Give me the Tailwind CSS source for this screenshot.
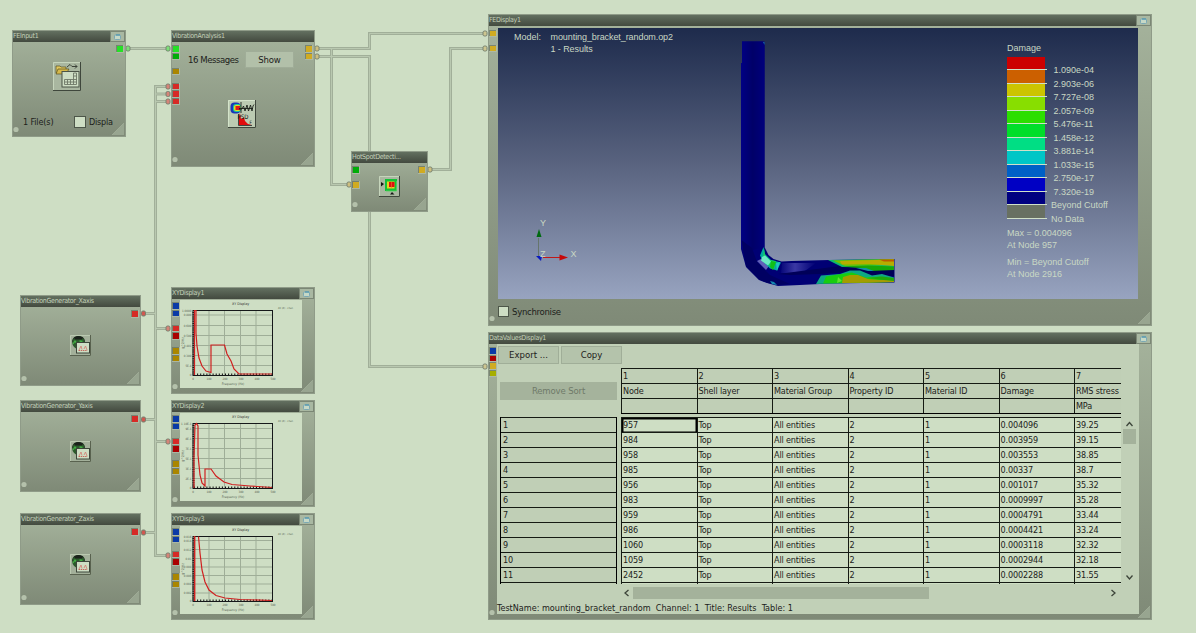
<!DOCTYPE html>
<html lang="en">
<head>
<meta charset="utf-8">
<title>Vibration analysis flow</title>
<script src="https://cdn.jsdelivr.net/npm/@tailwindcss/browser@4"></script>
</head>
<body class="bg-[#cedec4]">
<main class="relative w-[1196px] h-[633px] overflow-hidden bg-[#cedec4] text-[#1c211a] font-['DejaVu_Sans_Condensed','DejaVu_Sans',sans-serif] text-[9px] leading-none whitespace-nowrap">

  <!-- pipes between glyphs -->
  <svg class="absolute inset-0" width="1196" height="633" fill="none">
    <defs>
      <g id="pipes">
        <path d="M128 48.5H168M317 48.5H369.5V33.5H485M331.500 48.500V184.500H349M317 56.500H369.500V366.500H485M430 169.500H450.500V48.500H485"/>
        <path d="M168 86.500H155.500V555.500H168M155.500 94H168M155.500 101.500H168M143 313.500H155.500M155.500 328.500H168M143 419.500H155.500M155.500 441.500H168M143 532.500H155.500"/>
      </g>
    </defs>
    <use href="#pipes" stroke="#a1af99" stroke-width="3"/>
    <use href="#pipes" stroke="#b9c8b0" stroke-width="1"/>
    <g id="plugs" stroke="#75806f" stroke-width="1"></g>
  </svg>

  <!-- FEInput1 -->
  <section class="absolute left-[12px] top-[30px] w-[114px] h-[107px] flex flex-col border border-[#8f9b88] bg-linear-to-b from-[#a5b39c] to-[#7f8a77]" data-title="FEInput1" data-max="1">
    <div class="relative flex-1 flex flex-col">
      <div data-ports="lime" data-side="right"></div>
      <svg class="mt-[20px] ml-[40px]" width="28" height="29" viewBox="0 0 28 29">
        <path d="M0 0H28V29H0Z" fill="#a9b7a0"/><path d="M.5 28V.5H27" fill="none" stroke="#c6d5bc"/><path d="M27.500 0V28.500H0" fill="none" stroke="#3f473c"/>
        <path d="M3 4h4l1 1h5v6H3z" fill="#e0c65c" stroke="#554d20" stroke-width=".7"/><path d="M5 7h11l-3 5H3z" fill="#d6b94a" stroke="#554d20" stroke-width=".7"/>
        <path d="M14 5l3-2.500 2 2h5l-2-2m2 2l-2 2" fill="none" stroke="#3b4238"/>
        <rect x="9" y="9.500" width="17" height="15.500" fill="#cedec4" stroke="#4b5447"/>
        <path d="M11.500 17.500h12v5h-12zM11.500 20h12M14.500 17.500v5M17.500 17.500v5M20.500 11v11.500M23.500 11v7M20.500 11h3M20.500 14h3" fill="none" stroke="#6d7767" stroke-width=".9"/>
      </svg>
      <div class="mt-[24px] w-full h-[13px] flex items-center pl-[10px]">
        <span class="w-[51px] text-[9px] tracking-[-0.15px] pt-px">1 File(s)</span>
        <span class="w-[12px] h-[12px] bg-[#cedec4] border border-[#4d5649]"></span>
        <span class="ml-[3px] text-[9px] tracking-[-0.2px] pt-px">Displa</span>
      </div>
    </div>
  </section>

  <!-- VibrationAnalysis1 -->
  <section class="absolute left-[171px] top-[30px] w-[144px] h-[137px] flex flex-col border border-[#8f9b88] bg-linear-to-b from-[#a5b39c] to-[#7f8a77]" data-title="VibrationAnalysis1">
    <div class="relative flex-1 flex flex-col">
      <div data-ports="lime green - gold - red red red" data-side="left"></div>
      <div data-ports="amber amber" data-side="right"></div>
      <div class="mt-[9px] ml-[16px] flex items-center gap-[6px]">
        <span class="w-[51px] text-[9.500px] tracking-[-0.45px]">16 Messages</span>
        <span class="w-[49px] h-[17px] flex items-center justify-center bg-[#b2c0a9] border border-[#a0ad98] text-[9.500px] tracking-[-0.2px]">Show</span>
      </div>
      <svg class="mt-[32px] ml-[56px]" width="28" height="28" viewBox="0 0 28 28">
        <path d="M0 0H28V28H0Z" fill="#bccbb2"/><path d="M.5 27V.5H27" fill="none" stroke="#d4e3ca"/><path d="M27.500 0V27.500H0" fill="none" stroke="#3f473c"/>
        <rect x="2.500" y="2.500" width="10" height="11" rx="4" fill="#1a38b8"/><rect x="5" y="4" width="8" height="8" rx="3" fill="#18c8a0"/><rect x="6" y="5" width="6.500" height="6" rx="2" fill="#e6dc20"/><rect x="7.500" y="6" width="4.500" height="4" fill="#e01818"/>
        <path d="M11 9h3l1.500-3 1.500 5 2-6 1.500 6 2-6 1.500 6 1-5 1-1.500M13 2v11M11 8.500h14" fill="none" stroke="#1b201a" stroke-width=".9"/>
        <path d="M11 25V16l1-3 1 6 3-1.500 1 3.500 3 3 4 1z" fill="#e00c0c"/><path d="M10.500 14V25.500H24" fill="none" stroke="#222" stroke-width=".8"/>
        <text x="9.500" y="19" font-size="6" fill="#111">PSD</text><text x="21.500" y="24" font-size="4.500" fill="#111">F</text>
      </svg>
    </div>
  </section>

  <!-- HotSpotDetection -->
  <section class="absolute left-[351px] top-[151px] w-[77px] h-[61px] flex flex-col border border-[#8f9b88] bg-linear-to-b from-[#a5b39c] to-[#7f8a77]" data-title="HotSpotDetecti...">
    <div class="relative flex-1">
      <div data-ports="green - amber" data-side="left"></div>
      <div data-ports="amber" data-side="right"></div>
      <svg class="mt-[13px] ml-[27px]" width="21" height="21" viewBox="0 0 21 21">
        <path d="M0 0H21V21H0Z" fill="#a9b7a0"/><path d="M.5 20V.5H20" fill="none" stroke="#c6d5bc"/><path d="M20.500 0V20.500H0" fill="none" stroke="#3f473c"/>
        <rect x="6" y="3" width="12" height="12" fill="#12c236"/><path d="M17.500 5V15H7" fill="none" stroke="#5ccf5e" stroke-width=".8"/><rect x="8" y="5.500" width="7.500" height="7" fill="#e8d020"/><rect x="10" y="6" width="5.500" height="5" fill="#e01010"/><path d="M12.500 5.500v7" stroke="#e88020" stroke-width=".6"/>
        <path d="M2 6l3 2-3 2.500zM11 18.500l2-2.500 2.500 2.500z" fill="#141814"/>
      </svg>
    </div>
  </section>

  <!-- FEDisplay1 -->
  <section class="absolute left-[488px] top-[14px] w-[664px] h-[312px] flex flex-col border border-[#8f9b88] bg-linear-to-b from-[#a5b39c] to-[#7f8a77]" data-title="FEDisplay1" data-max="1">
    <div class="relative flex-1 flex flex-col pl-[9px] pt-[2px]">
      <div data-ports="- amber - amber" data-side="top"></div>
      <div class="relative w-[640px] h-[271px] flex justify-between bg-linear-to-b from-[#1e2b4c] via-[#59637f] via-50% to-[#98a4c0] text-[#c9d8c4] font-['Liberation_Sans',Arial,sans-serif] text-[9px]">
        <svg class="absolute inset-0" width="640" height="271" viewBox="498 28 640 271">
          <defs>
            <linearGradient id="tube" x1="0" x2="1"><stop offset="0" stop-color="#000084"/><stop offset=".5" stop-color="#000068"/><stop offset="1" stop-color="#00007c"/></linearGradient>
            <linearGradient id="sheen" x1="0" x2="1"><stop offset="0" stop-color="#08087a"/><stop offset=".4" stop-color="#3a38a4"/><stop offset="1" stop-color="#000074"/></linearGradient>
          </defs>
          <path d="M742 41.500H763l1.500 3V247l4 8 5 4 8 2.500 10-.5 38-1 65-1V282.500L830 283.500 800 285 778 286 767 283 759 280 746 267 741 249V215h.5V187h-.5V160h.5V146h-.5V63h1z" fill="#000074"/>
          <path d="M742 41.500H764.500V247L753 250 741 249V63h1z" fill="url(#tube)"/>
          <path d="M741.500 240L746 266 759 279.500 768 283 778 285 790 284 770 275 757 262 752 248z" fill="#000062"/>
          <path d="M763 42h1.500v3z" fill="#1470a8"/>
          <path d="M782 263h34l-14 10H781z" fill="url(#sheen)"/>
          <path d="M778 274L840 266 870 268 894 270V276L870 275 850 272 820 274 790 275z" fill="#000058"/>
          <path d="M757 261l4-2 8 7-3 4z" fill="#6060b8"/>
          <path d="M763.500 247l1.500 7 6 6 10 2.500-4 8-7-2-7-7-3-6z" fill="#00aaa0"/>
          <path d="M764 248l1 7 5 5 6 1-2 8-6-4-5-8z" fill="#14d060"/>
          <path d="M762 257l3-1.500 6 6-3 4-7-5z" fill="#6ce8c4"/>
          <path d="M771 261l5 1-3 8-3-3z" fill="#10c018"/><path d="M776 263l4-1-3 9z" fill="#20c8c0"/>
          <path d="M770 281l4 1 3 3-5-1z" fill="#1488b0"/>
          <path d="M828 260l14 7 52 1V259z" fill="#0cb870"/>
          <path d="M833 260.500l12 5.500 49-1V259z" fill="#70c000"/>
          <path d="M840 261L894 259.500V266L870 264 842 264.500z" fill="#b8ac00"/>
          <path d="M879 259.500H894V261.500H884z" fill="#bc5a00"/>
          <path d="M841 266.500L868 265.500 894 266.500V270L870 271 862 268z" fill="#18a808"/>
          <path d="M856 268l10 0 8 3-6 0z" fill="#1090a0"/>
          <path d="M816 284l5-8.500L840 274l10-3.500 10 0 12 5 10-1.500 12 3.500V282L850 283z" fill="#0ea884"/>
          <path d="M823 283.500l3-7 12-2 14-2 14 5 14-1 14 3.500V282z" fill="#18cc10"/>
          <path d="M842 283L843 277l7-2h8l10 4 12 1 14-.5V282L868 282.800z" fill="#a49c00"/>
          <path d="M868 278l14-1.500 12 1.500V281l-10-1z" fill="#20a80c"/>
          <path d="M838 277l4 4-5 2z" fill="#60e030"/>
          <!-- axis triad -->
          <path d="M538.500 256.500V238" stroke="#66756c" stroke-width="1"/><path d="M539 229l-2.500 8h5z" fill="#006a10"/>
          <path d="M543 257.500H560" stroke="#c01818" stroke-width="1"/><path d="M568 257.500l-8.500-3v6z" fill="#c80808"/>
          <path d="M536 256l6 0-1 5z" fill="#0818c0"/>
          <g fill="#c9d8c4" font-size="9"><text x="540" y="226">Y</text><text x="570.500" y="257">X</text><text x="540" y="257">Z</text></g>
        </svg>
        <div class="relative flex gap-[9.500px] pl-[16px] pt-[3px] leading-[12px]">
          <span>Model:</span>
          <span class="tracking-[-0.08px]">mounting_bracket_random.op2<br>1 - Results</span>
        </div>
        <div class="relative w-[131px] pt-[16px] flex flex-col">
          <span class="h-[12.500px]">Damage</span>
          <div id="legend" class="flex flex-col"></div>
          <div class="mt-[8px] leading-[12px]">Max = 0.004096<br>At Node 957</div>
          <div class="mt-[5px] leading-[12px]">Min = Beyond Cutoff<br>At Node 2916</div>
        </div>
      </div>
      <label class="mt-[7px] flex items-center gap-[3px] text-[9.500px] tracking-[-0.3px]"><span class="w-[11px] h-[11px] bg-[#cedec4] border border-[#4d5649]"></span>Synchronise</label>
    </div>
  </section>

  <!-- DataValuesDisplay1 -->
  <section class="absolute left-[488px] top-[332px] w-[664px] h-[288px] flex flex-col border border-[#8f9b88] bg-linear-to-b from-[#a5b39c] to-[#7f8a77]" data-title="DataValuesDisplay1" data-max="1">
    <div class="relative flex-1 pl-[8px]">
      <div data-ports="blue crimson amber olive" data-side="left"></div>
      <div class="w-[642px] h-[270px] bg-[#c1d0b7] flex flex-col">
        <div class="flex gap-[2px] pt-[2px] pl-[1px] text-[9.500px]">
          <span class="w-[61px] h-[18px] flex items-center justify-center bg-[#b4c3ab] border border-[#a0ae98]">Export ...</span>
          <span class="w-[61px] h-[18px] flex items-center justify-center bg-[#b4c3ab] border border-[#a0ae98]">Copy</span>
        </div>
        <div class="flex pl-[3px] mt-[4px]">
          <div class="w-[117px] flex flex-col tracking-[-0.15px]">
            <span class="mt-[14px] h-[18px] flex items-center justify-center bg-[#a5b39c] text-[#6f7a69] text-[9.500px]">Remove Sort</span>
            <div id="rownums" class="mt-[17px] h-[167px] overflow-hidden border-x border-black flex flex-col"></div>
          </div>
          <div class="ml-[4px] w-[500px] tracking-[-0.15px]">
            <div id="thead" class="overflow-hidden border-b border-black h-[46px]"></div>
            <div id="tbody" class="mt-[3px] overflow-hidden h-[167px]"></div>
          </div>
          <div class="ml-[2px] mt-[49px] w-[13px] h-[166px] flex flex-col items-center justify-between pt-[4px] pb-[2px]">
            <svg width="13" height="23" fill="none"><path d="M3.500 5l3-3.500 3 3.500" stroke="#3d453a" stroke-width="1.300"/><rect y="8" width="13" height="15" fill="#a4b29b"/></svg>
            <svg width="13" height="7" fill="none"><path d="M3.500 1.500l3 3.500 3-3.500" stroke="#3d453a" stroke-width="1.300"/></svg>
          </div>
        </div>
        <div class="mt-[3px] ml-[124px] h-[12px] w-[500px] flex items-center">
          <svg width="12" height="12" fill="none"><path d="M7.500 3L4 6l3.500 3" stroke="#3d453a" stroke-width="1.300"/></svg>
          <span class="w-[296px] h-[12px] bg-[#a4b29b]"></span>
          <svg class="ml-[178px]" width="12" height="12" fill="none"><path d="M4.500 3L8 6 4.500 9" stroke="#3d453a" stroke-width="1.300"/></svg>
        </div>
        <div class="mt-[5px] text-[9px] whitespace-pre">TestName: mounting_bracket_random  Channel: 1  Title: Results  Table: 1</div>
      </div>
    </div>
  </section>

  <!-- Vibration generators -->
  <section class="absolute left-[20px] top-[295px] w-[121px] h-[91px] flex flex-col border border-[#8f9b88] bg-linear-to-b from-[#a5b39c] to-[#7f8a77]" data-title="VibrationGenerator_Xaxis">
    <div class="relative flex-1"><div data-ports="red" data-side="right"></div><svg class="mt-[28px] ml-[49px]" width="21" height="21"><use href="#gen"/></svg></div>
  </section>
  <section class="absolute left-[20px] top-[400px] w-[121px] h-[92px] flex flex-col border border-[#8f9b88] bg-linear-to-b from-[#a5b39c] to-[#7f8a77]" data-title="VibrationGenerator_Yaxis">
    <div class="relative flex-1"><div data-ports="red" data-side="right"></div><svg class="mt-[29px] ml-[49px]" width="21" height="21"><use href="#gen"/></svg></div>
  </section>
  <section class="absolute left-[20px] top-[513px] w-[121px] h-[92px] flex flex-col border border-[#8f9b88] bg-linear-to-b from-[#a5b39c] to-[#7f8a77]" data-title="VibrationGenerator_Zaxis">
    <div class="relative flex-1"><div data-ports="red" data-side="right"></div><svg class="mt-[29px] ml-[49px]" width="21" height="21"><use href="#gen"/></svg></div>
  </section>
  <svg class="absolute" width="0" height="0">
    <symbol id="gen" viewBox="0 0 21 21">
      <path d="M0 0H21V21H0Z" fill="#a3b09a"/><path d="M.5 20V.5H20" fill="none" stroke="#bac9b0"/><path d="M20.500 0V20.500H0" fill="none" stroke="#59624f"/>
      <path d="M2 7C2 3 5 1 8.500 1S15 3 15 7z" fill="#233322"/><circle cx="8.500" cy="7.500" r="6.300" fill="#2c5a2c"/><path d="M4 2.500q4-3 9 0l-1 2H5z" fill="#1a211a"/><path d="M3 9l2-3 2 2.500M9.500 6l3 .5" stroke="#44b044" fill="none" stroke-width="1.300"/>
      <rect x="6.500" y="7.500" width="13" height="10.500" fill="#cedec4" stroke="#3d463a"/><path d="M9 15l2-4 1 3.500M14 14l1.500-3 1.500 4" stroke="#d2786e" fill="none" stroke-width=".8"/><path d="M8.500 15.500h9" stroke="#c04a42" stroke-width=".8" stroke-dasharray="1.500 .7"/>
    </symbol>
  </svg>

  <!-- XY displays -->
  <section class="absolute left-[171px] top-[287px] w-[144px] h-[107px] flex flex-col border border-[#8f9b88] bg-linear-to-b from-[#a5b39c] to-[#7f8a77]" data-title="XYDisplay1" data-max="1">
    <div class="relative flex-1 pl-[8px]"><div data-ports="blue blue - red crimson - gold gold" data-side="left"></div><div data-chart="0"></div></div>
  </section>
  <section class="absolute left-[171px] top-[400px] w-[144px] h-[107px] flex flex-col border border-[#8f9b88] bg-linear-to-b from-[#a5b39c] to-[#7f8a77]" data-title="XYDisplay2" data-max="1">
    <div class="relative flex-1 pl-[8px]"><div data-ports="blue blue - red crimson - gold gold" data-side="left"></div><div data-chart="1"></div></div>
  </section>
  <section class="absolute left-[171px] top-[513px] w-[144px] h-[107px] flex flex-col border border-[#8f9b88] bg-linear-to-b from-[#a5b39c] to-[#7f8a77]" data-title="XYDisplay3" data-max="1">
    <div class="relative flex-1 pl-[8px]"><div data-ports="blue blue - red crimson - gold gold" data-side="left"></div><div data-chart="2"></div></div>
  </section>
</main>

<script>
const portColor = {
  lime: 'bg-[#26e026]', green: 'bg-[#00ac08]', gold: 'bg-[#aa8600]', amber: 'bg-[#d0ab22]',
  red: 'bg-[#d62a26]', crimson: 'bg-[#aa0000]', blue: 'bg-[#0a3aa6]', olive: 'bg-[#a6ae00]'
};
const side = {
  left: 'absolute left-0 top-[3px] flex flex-col',
  top: 'absolute left-0 top-[-4px] flex flex-col',
  right: 'absolute right-[1px] top-[3px] flex flex-col'
};
document.querySelectorAll('[data-ports]').forEach(el => {
  el.className = side[el.dataset.side];
  el.innerHTML = el.dataset.ports.split(' ').map(p => p === '-'
    ? '<i class="block w-[8px] h-[7.500px]"></i>'
    : `<i class="block w-[8px] h-[7.500px] pt-px pl-px border-b border-r border-[#c3cfba]/70 bg-[#5f6a5a]/60"><b class="block w-full h-full ${portColor[p]}"></b></i>`).join('');
});

document.querySelectorAll('[data-title]').forEach(win => {
  const max = win.dataset.max ? `<span class="w-[15px] h-full flex items-center justify-center bg-[#a9b8a2] border border-[#7b8775]"><svg width="7" height="6"><rect x=".5" y="1" width="6" height="4.500" rx="1" fill="#c6d8c6" stroke="#7ba9b4"/><path d="M2 1h4" stroke="#3e8fb0"/></svg></span>` : '';
  win.insertAdjacentHTML('afterbegin', `<header class="h-[11px] shrink-0 flex items-center justify-between bg-linear-to-b from-[#637060] to-[#434a3f] text-[#c3d1ba] text-[7px] tracking-[-0.32px]"><span>${win.dataset.title}</span>${max}</header>`);
  win.insertAdjacentHTML('beforeend', `<svg class="absolute left-0 bottom-[3px]" width="7" height="7"><circle cx="3" cy="3.500" r="2.600" fill="#b4c1ab"/></svg><svg class="absolute right-[1px] bottom-[1px]" width="12" height="12"><path d="M12 0V12H0z" fill="#98a590"/><path d="M12 0L0 12" stroke="#a9b6a0" stroke-width=".6"/></svg>`);
});

// pipe end connectors
const plugs = [
  [128,48.5,'#7ce078'],[168,48.5,'#7ce078'],[317,48.5,'#cdbf80'],[317,56.5,'#cdbf80'],
  [168,86.5,'#d68478'],[168,94,'#d68478'],[168,101.5,'#d68478'],[349,184.5,'#cdbf80'],[430,169.5,'#cdbf80'],
  [485,33.5,'#cdc690'],[485,48.5,'#cdc690'],[485,366.5,'#cdc690'],
  [143.5,313.5,'#d05850'],[168,328.5,'#d68478'],[143.5,419.5,'#d05850'],[168,441.5,'#d68478'],[143.5,532.5,'#d05850'],[168,555.5,'#d68478']
];
document.getElementById('plugs').innerHTML = plugs.map(([x,y,c]) => `<rect x="${x-2}" y="${y-2.5}" width="4" height="5" rx="1.5" fill="${c}"/>`).join('');

// contour legend
const levels = [
  ['bg-[#cc0000]','1.090e-04'],['bg-[#cc6000]','2.903e-06'],['bg-[#ccc400]','7.727e-08'],['bg-[#88de00]','2.057e-09'],
  ['bg-[#2cde00]','5.476e-11'],['bg-[#00de2a]','1.458e-12'],['bg-[#00de84]','3.881e-14'],['bg-[#00c6c6]','1.033e-15'],
  ['bg-[#0060c6]','2.750e-17'],['bg-[#0000c4]','7.320e-19'],['bg-[#000080]','Beyond Cutoff'],['bg-[#687062]','No Data']
];
document.getElementById('legend').innerHTML = levels.map(([c,t],i) => `<div class="flex h-[13.500px]"><span class="w-[38px] ${c}"></span><span class="absolute w-[40px] h-[13.500px] border-b border-[#d0e0c8]"></span><span class="${i < 10 ? 'ml-[8.500px]' : 'ml-[6px]'} mt-[8.500px] leading-[10px]">${t}</span></div>`).join('');

// results table
const heads = ['Node','Shell layer','Material Group','Property ID','Material ID','Damage','RMS stress'];
const data = [
  ['957','0.004096','39.25'],['984','0.003959','39.15'],['958','0.003553','38.85'],['985','0.00337','38.7'],
  ['956','0.001017','35.32'],['983','0.0009997','35.28'],['959','0.0004791','33.44'],['986','0.0004421','33.24'],
  ['1060','0.0003118','32.32'],['1059','0.0002944','32.18'],['2452','0.0002288','31.55']
];
const row = (cells, cls) => `<div class="grid grid-cols-[repeat(7,75.500px)] h-[15px] ${cls}">` + cells.map(c => `<span class="border-l border-t border-[#151a13] pl-[1px] leading-[15px]">${c}</span>`).join('') + '</div>';
document.getElementById('thead').innerHTML = [['1','2','3','4','5','6','7'], heads, ['','','','','','','MPa']].map(r => row(r, 'bg-[#c0cfb6]')).join('');
document.getElementById('tbody').innerHTML = data.map(([n,d,s]) => row([n,'Top','All entities','2','1',d,s], 'bg-[#cedec4]')).join('') + row(['','','','','','',''], 'bg-[#cedec4]');
document.querySelector('#tbody span').classList.add('shadow-[inset_0_0_0_1.5px_#000]');
document.getElementById('rownums').innerHTML = data.map((_,i) => `<span class="h-[15px] shrink-0 border-t border-[#151a13] pl-[2px] leading-[15px] bg-[#c0cfb6]">${i+1}</span>`).join('') + '<span class="h-[15px] shrink-0 border-t border-[#151a13]"></span>';

// XY charts
const charts = [
  { grid: [15,25.5,35.5,45.5,55.5,65.5], labels: ['1.0000','0.800','0.600','0.500','0.401','0.300','5E-4','0'],
    d: 'M14.500 75V10.500H16V33L17 46 19 58 22 66 26 71 31 72.500V45H44.500L47 54 51 61 54 69 59 74H92' },
  { grid: [15.5,25.5,35.5,45.5,55.5,65.5], labels: ['1.10E-1','9E-1','8E-1','7E-1','5E-1','3E-1','2E-1','0'],
    d: 'M14 75V45L15 12 16.500 10.500 18 13V42L20 62 22 70 25 73V56H31L36 63 44 69 52 71.500 70 73 92 74.500' },
  { grid: [14.5,23.5,32.5,41,49.5,58,67], labels: ['0.016','0.014','0.012','0.01','0.008','0.006','0.004','0.002','0'],
    d: 'M14.800 75V10.500H14.500V75M18.500 10.500L20 27 22 44 25 56 29 64 36 69.500 45 72 60 73.500 92 74.500' }
];
document.querySelectorAll('[data-chart]').forEach(el => {
  const c = charts[el.dataset.chart];
  const ys = [10.5, ...c.grid, 75];
  let s = '<svg class="mt-[1px] block bg-[#cedec4]" width="122" height="88" fill="none">';
  s += '<g stroke="#9fae98" stroke-width="1">' + c.grid.map(y => `<path d="M13 ${y}H93"/>`).join('') + [29,44.5,60.5,76].map(x => `<path d="M${x} 10V75"/>`).join('') + '</g>';
  s += '<path d="M13.500 12V75" stroke="#111" stroke-width="2" stroke-dasharray="1 1.200"/><path d="M14 74.500H92" stroke="#111" stroke-width="2" stroke-dasharray="1 2.100"/>';
  s += '<rect x="13" y="10.500" width="79.500" height="65" stroke="#15181a"/>';
  s += `<path d="${c.d}" stroke="#d02020" stroke-width="1.200"/>`;
  s += '<g fill="#555e50" font-size="3">' + ys.map((y,i) => `<text x="11.500" y="${y+1}" text-anchor="end">${c.labels[i] || ''}</text>`).join('') + ['0','100','200','300','400','500'].map((t,i) => `<text x="${13+i*16}" y="79.500" text-anchor="middle">${t}</text>`).join('') + '<text x="53" y="85" text-anchor="middle" font-size="3.300">Frequency (Hz)</text><text x="60.500" y="4.500" text-anchor="middle" font-size="3.600" fill="#333">XY Display</text><text x="98" y="9" font-size="2.600">d2 (Z) . chan</text><text transform="translate(4 43) rotate(-90)" text-anchor="middle" font-size="3.500">g^2/Hz</text></g></svg>';
  el.innerHTML = s;
});
</script>
</body>
</html>
